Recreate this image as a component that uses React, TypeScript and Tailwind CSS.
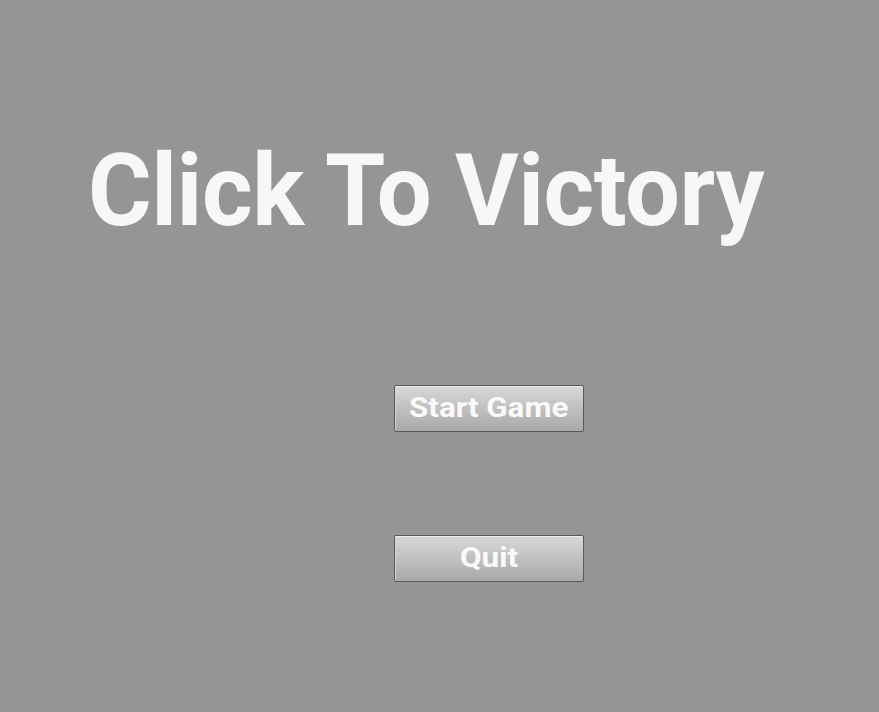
export default function App() {
  return (
    <div
      className="w-[879px] h-[712px] bg-[#959595] flex flex-col overflow-hidden"
      style={{ fontFamily: 'Roboto, "Liberation Sans", sans-serif' }}
    >
      {/* 标题 */}
      <h1 className="mt-[131px] ml-[88px] text-[101px] leading-[120px] font-bold text-[#f7f7f7] tracking-[-0.5px] origin-left scale-x-[0.965]">
        Click To Victory
      </h1>

      {/* 按钮 */}
      <div className="mt-[134px] ml-[394px] flex flex-col gap-[103px]">
        <MenuButton label="Start Game" />
        <MenuButton label="Quit" />
      </div>
    </div>
  )
}

function MenuButton({ label }: { label: string }) {
  return (
    <button className="w-[190px] h-[47px] border border-[#5a5a5a] rounded-[2px] bg-gradient-to-b from-[#d8d8d8] to-[#a9a9a9] shadow-[inset_0_1px_0_#ececec,inset_1px_0_0_#d0d0d0] flex items-center justify-center">
      <span className="inline-block text-[27px] font-bold text-[#fafafa] leading-none scale-x-[1.16]">
        {label}
      </span>
    </button>
  )
}
